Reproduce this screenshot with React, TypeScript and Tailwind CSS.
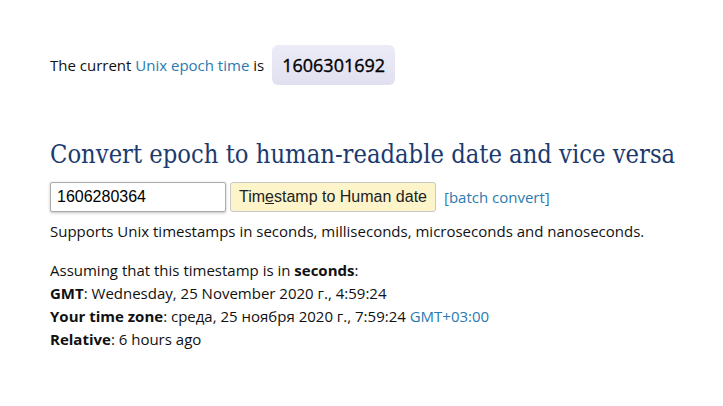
export default function App() {
  return (
    <div className="min-h-[406px] bg-white pl-[50px] pt-[45px] text-[#111] [font-family:'Open_Sans',sans-serif]">
      <div className="flex items-center text-[15px]">
        <span>
          The current <a className="text-[#2a7ab0]">Unix epoch time</a> is
        </span>
        <span className="ml-[8px] flex h-[40px] w-[123px] items-center justify-center rounded-[6px] bg-gradient-to-b from-[#ececf8] to-[#e0e0f0] text-[18px] font-normal text-black [-webkit-text-stroke:0.35px_black]">
          1606301692
        </span>
      </div>
      <h2 className="mt-[55px] text-[25.3px] leading-[30px] text-[#1b3a6e] [font-family:'DejaVu_Serif_Condensed','DejaVu_Serif',serif]">
        Convert epoch to human-readable date and vice versa
      </h2>
      <div className="mt-[12px] flex items-center">
        <input
          defaultValue="1606280364"
          className="h-[30px] w-[176px] rounded-[2px] border border-[#aaa] bg-white px-[6px] text-[16px] text-black shadow-[0_1px_3px_rgba(0,0,0,0.25)] outline-none [font-family:'Liberation_Sans',Arial,sans-serif]"
        />
        <button className="ml-[4px] h-[30px] w-[206px] rounded-[3px] border border-[#c8c8c8] bg-[#fdf5c9] text-[16px] text-[#222] [font-family:'Liberation_Sans',Arial,sans-serif]">
          Tim<u>e</u>stamp to Human date
        </button>
        <a className="ml-[8px] text-[15px] text-[#2a7ab0]">[batch convert]</a>
      </div>
      <p className="mt-[8px] text-[15px]">
        Supports Unix timestamps in seconds, milliseconds, microseconds and nanoseconds.
      </p>
      <div className="mt-[16px] text-[15px] leading-[23px]">
        <div>
          Assuming that this timestamp is in <b>seconds</b>:
        </div>
        <div>
          <b>GMT</b>: Wednesday, 25 November 2020 г., 4:59:24
        </div>
        <div>
          <b>Your time zone</b>: среда, 25 ноября 2020 г., 7:59:24 <span className="text-[#2a7ab0]">GMT+03:00</span>
        </div>
        <div>
          <b>Relative</b>: 6 hours ago
        </div>
      </div>
    </div>
  );
}
